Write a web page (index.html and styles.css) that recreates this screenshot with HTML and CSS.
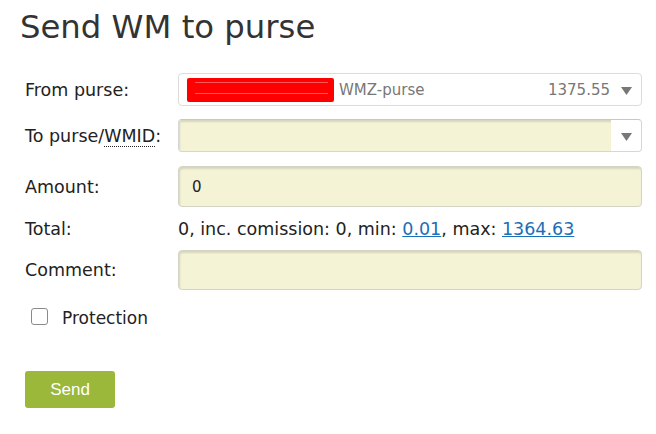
FILE: index.html
```html
<!DOCTYPE html>
<html>
<head>
<meta charset="utf-8">
<link rel="stylesheet" href="styles.css">
</head>
<body>
<div class="page">
  <h1 class="title">Send WM to purse</h1>
  <div class="form">
    <div class="row row-from">
      <div class="label">From purse:</div>
      <div class="select select-white">
        <span class="redact"><span class="line l1"></span><span class="line l2"></span></span>
        <span class="purse-name">WMZ-purse</span>
        <span class="purse-sum">1375.55</span>
        <span class="arrow"><svg width="11" height="8" viewBox="0 0 11 8"><path d="M0 0H11L5.5 8Z" fill="#777"/></svg></span>
      </div>
    </div>
    <div class="row row-to">
      <div class="label">To purse/<abbr class="abbr">WMID</abbr>:</div>
      <div class="select select-yellow">
        <span class="fill"></span>
        <span class="arrow"><svg width="11" height="8" viewBox="0 0 11 8"><path d="M0 0H11L5.5 8Z" fill="#777"/></svg></span>
      </div>
    </div>
    <div class="row row-amount">
      <div class="label">Amount:</div>
      <div class="input input-tall"><span class="input-text">0</span></div>
    </div>
    <div class="row row-total">
      <div class="label">Total:</div>
      <div class="value">0, inc. comission: 0, min: <a class="link" href="#">0.01</a>, max: <a class="link" href="#">1364.63</a></div>
    </div>
    <div class="row row-comment">
      <div class="label">Comment:</div>
      <div class="input input-comment"></div>
    </div>
    <div class="check-row">
      <span class="checkbox"></span>
      <span class="check-label">Protection</span>
    </div>
    <div class="btn-row">
      <button class="btn">Send</button>
    </div>
  </div>
</div>
</body>
</html>
```

FILE: styles.css
```css
html, body {
  margin: 0;
  padding: 0;
  background: #fff;
}
body {
  font-family: "DejaVu Sans", Verdana, sans-serif;
  color: #222;
}
.page {
  padding: 8px 14px 0 20px;
}
.title {
  margin: 0;
  font-size: 32.3px;
  line-height: 38px;
  font-weight: normal;
  color: #333;
}
.form {
  display: flex;
  flex-direction: column;
  margin-top: 27px;
}
.row {
  display: flex;
  align-items: center;
}
.label {
  width: 158px;
  flex: none;
  padding-left: 5px;
  box-sizing: border-box;
  font-size: 17.5px;
  color: #222;
}
.abbr {
  text-decoration: none;
  border-bottom: 1px dotted #222;
}
.select, .input {
  flex: 1;
  box-sizing: border-box;
  border-radius: 4px;
  display: flex;
  align-items: center;
  position: relative;
}
.select-white {
  height: 33px;
  border: 1px solid #dcdcdc;
  background: #fff;
  padding: 0 9px 0 8px;
}
.redact {
  width: 147px;
  height: 24px;
  background: #ff0000;
  border-radius: 2px;
  position: relative;
  flex: none;
}
.line {
  position: absolute;
  left: 8px;
  right: 6px;
  height: 1px;
  background: #ff5a5a;
}
.l1 { top: 4px; }
.l2 { top: 15px; }
.purse-name {
  margin-left: 5px;
  font-size: 15px;
  color: #777;
}
.purse-sum {
  margin-left: auto;
  font-size: 15px;
  color: #777;
}
.arrow {
  display: flex;
  margin-left: 11px;
  margin-top: 2px;
}
.row-to {
  margin-top: 13px;
}
.select-yellow {
  height: 33px;
  border: 1px solid #d6d6d6;
  border-top-color: #c8c8c0;
  background: #fff;
  overflow: hidden;
}
.select-yellow .fill {
  align-self: stretch;
  flex: 1;
  background: #f4f3d6;
  box-shadow: inset 1px 2px 2px rgba(0, 0, 0, 0.12);
}
.select-yellow .arrow {
  margin: 2px 9px 0 10px;
}
.input {
  background: #f4f3d6;
  border: 1px solid #d3d3c6;
  box-shadow: inset 1px 2px 2px rgba(0, 0, 0, 0.12);
}
.row-amount {
  margin-top: 14px;
}
.input-tall {
  height: 41px;
}
.input-text {
  padding-left: 13px;
  font-size: 15px;
  color: #222;
}
.row-total {
  height: 43px;
}
.value {
  font-size: 17.5px;
  color: #222;
}
.link {
  color: #1a6fb7;
  text-decoration: underline;
}
.input-comment {
  height: 40px;
}
.check-row {
  display: flex;
  align-items: flex-start;
  margin-top: 17px;
  padding-left: 11px;
}
.checkbox {
  width: 15px;
  height: 15px;
  border: 1px solid #8a8a8a;
  border-radius: 3px;
  background: #fff;
  margin-top: 1px;
}
.check-label {
  margin-left: 14px;
  margin-top: 1px;
  font-size: 17px;
  line-height: 20px;
  color: #222;
}
.btn-row {
  margin-top: 43px;
  padding-left: 5px;
}
.btn {
  width: 90px;
  height: 37px;
  border: none;
  border-radius: 3px;
  background: #9bb83a;
  color: #fff;
  font-family: "Liberation Sans", Arial, sans-serif;
  font-size: 17px;
  padding: 0;
}
```
